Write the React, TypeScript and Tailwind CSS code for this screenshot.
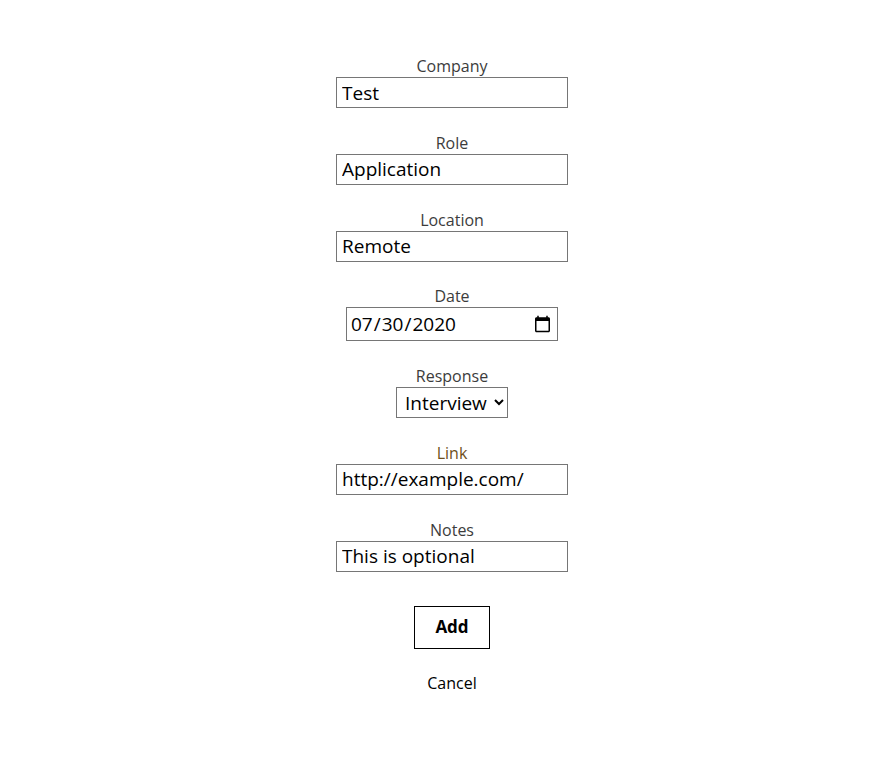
import React, { useState } from "react";

const fieldInput =
  "w-[232px] h-[31px] border border-[#767676] bg-white px-[5px] text-[19px] text-black outline-none";

const Field = ({
  label,
  children,
  labelClass = "text-[#3c3c3c]",
}: {
  label: string;
  children: React.ReactNode;
  labelClass?: string;
}) => (
  <div className="flex flex-col items-center">
    <label className={`text-[16px] leading-[22px] ${labelClass}`}>{label}</label>
    {children}
  </div>
);

const App = () => {
  const [company, setCompany] = useState("Test");
  const [role, setRole] = useState("Application");
  const [location, setLocation] = useState("Remote");
  const [date, setDate] = useState("2020-07-30");
  const [response, setResponse] = useState("Interview");
  const [link, setLink] = useState("http://example.com/");
  const [notes, setNotes] = useState("");

  return (
    <div
      className="min-h-screen bg-white flex flex-col items-center pt-[55px] pl-[27px]"
      style={{ fontFamily: "'Open Sans', 'Noto Sans', sans-serif" }}
    >
      <form className="flex flex-col items-center gap-[23.8px]">
        <Field label="Company">
          <input
            className={fieldInput}
            value={company}
            onChange={(e) => setCompany(e.target.value)}
          />
        </Field>

        <Field label="Role">
          <input
            className={fieldInput}
            value={role}
            onChange={(e) => setRole(e.target.value)}
          />
        </Field>

        <Field label="Location">
          <input
            className={fieldInput}
            value={location}
            onChange={(e) => setLocation(e.target.value)}
          />
        </Field>

        <Field label="Date">
          <input
            type="date"
            className="w-[212px] h-[34px] border border-[#767676] bg-white px-[3px] text-[19px] text-black outline-none"
            value={date}
            onChange={(e) => setDate(e.target.value)}
          />
        </Field>

        <Field label="Response">
          <select
            className="w-[112px] h-[31px] border border-[#767676] bg-white pl-[4px] pr-[2px] text-[19px] text-black outline-none"
            value={response}
            onChange={(e) => setResponse(e.target.value)}
          >
            <option>Applied</option>
            <option>Interview</option>
            <option>Offer</option>
            <option>Rejected</option>
          </select>
        </Field>

        <Field label="Link" labelClass="text-[#6e5020]">
          <input
            className={fieldInput}
            value={link}
            onChange={(e) => setLink(e.target.value)}
          />
        </Field>

        <Field label="Notes">
          <input
            className={`${fieldInput} placeholder:text-black`}
            placeholder="This is optional"
            value={notes}
            onChange={(e) => setNotes(e.target.value)}
          />
        </Field>

        <button
          type="button"
          className="mt-[10px] w-[76px] h-[43px] border border-black bg-white text-[17px] font-bold text-black"
        >
          Add
        </button>
      </form>

      <button type="button" className="mt-[22px] text-[16px] text-black">
        Cancel
      </button>
    </div>
  );
};

export default App;
